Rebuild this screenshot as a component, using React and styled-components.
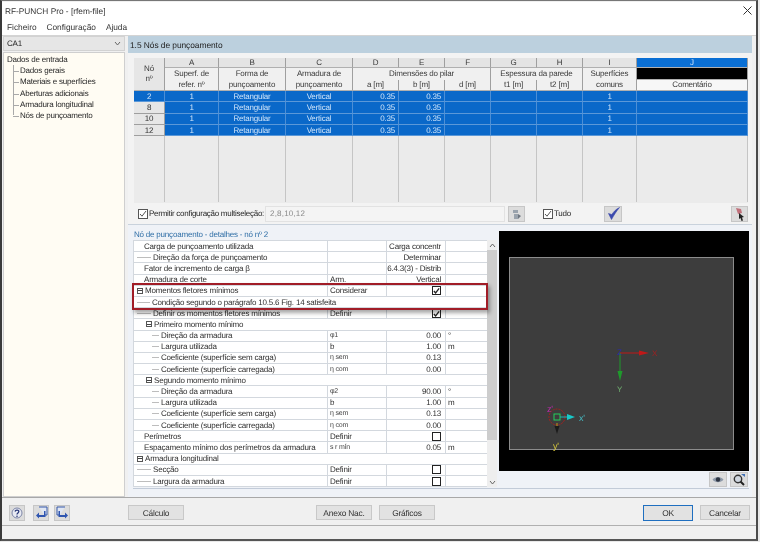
import React from 'react';
import styled, { createGlobalStyle } from 'styled-components';

const GlobalStyle = createGlobalStyle`
  html, body { margin: 0; padding: 0; background: #e9e9e9; }
  body { font-family: "Liberation Sans", Arial, sans-serif; font-size: 8px; letter-spacing: -0.2px; color: #262626; text-rendering: geometricPrecision; }
  * { box-sizing: border-box; }
`;

const Page = styled.div`
  width: 760px;
  height: 542px;
  overflow: hidden;
  filter: blur(0.3px);
`;

const Window = styled.div`
  width: 758px;
  height: 541px;
  display: flex;
  flex-direction: column;
  background: #f0f0f0;
  border-top: 1px solid #777;
  border-left: 2px solid #3a3a3a;
  border-right: 2px solid #4a4a4a;
  border-bottom: 2px solid #555;
`;

const TitleBar = styled.div`
  height: 17px;
  margin-top: 1px;
  flex: none;
  display: flex;
  align-items: center;
  justify-content: space-between;
  background: #fff;
  padding: 0 4px 0 3px;
  font-size: 8.3px;
  letter-spacing: 0;
  color: #333;
`;

const MenuBar = styled.div`
  height: 17px;
  flex: none;
  display: flex;
  align-items: center;
  gap: 10px;
  padding-left: 5px;
  background: #fff;
  font-size: 8.3px;
  letter-spacing: 0;
  color: #333;
  border-bottom: 1px solid #d4d4d4;
`;

const Body = styled.div`
  height: 462px;
  flex: none;
  display: flex;
  padding: 0 4px 0 1px;
  gap: 3px;
  border-bottom: 1px solid #a8a8a8;
`;

const Sidebar = styled.div`
  width: 122px;
  flex: none;
  display: flex;
  flex-direction: column;
  gap: 1px;
`;

const Combo = styled.div`
  height: 15px;
  flex: none;
  display: flex;
  align-items: center;
  justify-content: space-between;
  padding: 0 3px;
  background: #e6e6e6;
  border: 1px solid #d2d2d2;
`;

const Tree = styled.div`
  flex: 1;
  background: #fffcf3;
  border: 1px solid #cfcfcf;
  padding: 1px 0 0 3px;
`;

const TreeRoot = styled.div`
  height: 11.2px;
  line-height: 11.2px;
`;

const TreeList = styled.div`
  margin-left: 6px;
  background: linear-gradient(#a9a9a9, #a9a9a9) no-repeat 0 0 / 1px calc(100% - 6px);
`;

const TreeItem = styled.div`
  height: 11.2px;
  line-height: 11.2px;
  padding-left: 7px;
  background: linear-gradient(#a9a9a9, #a9a9a9) no-repeat 0 6px / 6px 1px;
`;

const Main = styled.div`
  flex: 1;
  min-width: 0;
  display: flex;
  flex-direction: column;
  background: #eff2f7;
`;

const SectionTitle = styled.div`
  height: 17px;
  flex: none;
  display: flex;
  align-items: center;
  padding-left: 2px;
  background: #bcd0de;
  font-size: 8.4px;
  letter-spacing: -0.05px;
  color: #222;
`;

const UpperPanel = styled.div`
  height: 172px;
  flex: none;
  padding: 5px 4px 0 6px;
  background: #f3f3f3;
  border-bottom: 1px solid #c9d2dc;
`;

const InputGrid = styled.div`
  display: grid;
  grid-template-columns: 31px 54px 67px 67px 46px 46px 46px 46px 46px 54px 111px;
  grid-template-rows: 10px 11.5px 11.5px repeat(4, 11.3px) 66px;
  height: 145px;
  background: #ebebeb;
  text-align: center;
  color: #3a3a3a;
`;

const HeadCell = styled.div`
  grid-column: ${p => p.$span ? `span ${p.$span}` : 'auto'};
  grid-row: ${p => p.$rows ? `span ${p.$rows}` : 'auto'};
  display: flex;
  align-items: center;
  justify-content: center;
  line-height: 10px;
  background: ${p => p.$bg || '#f0f0f0'};
  border-right: 1px solid #9f9f9f;
  border-bottom: ${p => p.$open ? 'none' : '1px solid #b0b0b0'};
  color: ${p => p.$fg || 'inherit'};
`;

const DataCell = styled.div`
  display: flex;
  align-items: center;
  justify-content: ${p => p.$right ? 'flex-end' : 'center'};
  padding-right: ${p => p.$right ? '3px' : '0'};
  background: ${p => p.$head ? '#e6e6e6' : '#0a68c9'};
  color: ${p => p.$head ? '#333' : '#cfe4fa'};
  border-right: 1px solid ${p => p.$head ? '#9f9f9f' : '#4d8fd6'};
  border-bottom: 1px solid ${p => p.$head ? '#9f9f9f' : '#5b98d8'};
`;

const EmptyCell = styled.div`
  background: #ebebeb;
  border-right: 1px solid #c5c5c5;
`;

const MultiBar = styled.div`
  height: 21px;
  display: flex;
  align-items: center;
  padding-left: 4px;
`;

const Box = styled.span`
  width: ${p => p.$size || 10}px;
  height: ${p => p.$size || 10}px;
  flex: none;
  margin-left: ${p => p.$ml || 0}px;
  display: inline-flex;
  background: #fff;
  border: 1px solid ${p => p.$dark ? '#222' : '#555'};
`;

const BarLabel = styled.span`
  width: ${p => p.$w}px;
  flex: none;
  margin-left: 1px;
  white-space: nowrap;
  letter-spacing: -0.27px;
`;

const MultiInput = styled.div`
  width: 240px;
  height: 16px;
  margin-left: 1px;
  padding-left: 4px;
  display: flex;
  align-items: center;
  background: #f4f4f4;
  border: 1px solid #e2e2e2;
  color: #8a8a8a;
  letter-spacing: .2px;
`;

const IconButton = styled.div`
  width: ${p => p.$w || 17}px;
  height: ${p => p.$h || 16}px;
  flex: none;
  margin-left: ${p => p.$ml || 0}px;
  display: flex;
  align-items: center;
  justify-content: center;
  background: #dcdcdc;
  border: 1px solid #c6c6c6;
`;

const Spacer = styled.div`
  flex: 1;
`;

const LowerPanel = styled.div`
  display: flex;
  height: 260px;
  flex: none;
  margin: 4px 3px 0 5px;
  border-bottom: 1px solid #c2cbd8;
`;

const DetailColumn = styled.div`
  width: 364px;
  flex: none;
  display: flex;
  flex-direction: column;
`;

const DetailTitle = styled.div`
  height: 11px;
  flex: none;
  padding-left: 1px;
  line-height: 11px;
  color: #2f6ea6;
`;

const DetailBody = styled.div`
  position: relative;
  display: flex;
`;

const DetailGrid = styled.div`
  width: 354px;
  flex: none;
  display: grid;
  grid-template-columns: 194px 58.7px 59.3px 42px;
  grid-auto-rows: 11.2px;
  background: #fff;
  border-top: 1px solid #d3d8de;
  border-left: 1px solid #d3d8de;
`;

const DetailCell = styled.div`
  grid-column: ${p => p.$span ? `span ${p.$span}` : 'auto'};
  display: flex;
  align-items: center;
  justify-content: ${p => p.$right ? 'flex-end' : 'flex-start'};
  padding: ${p => p.$right ? '0 4px 0 0' : '0 0 0 2px'};
  white-space: nowrap;
  overflow: hidden;
  border-right: 1px solid #d3d8de;
  border-bottom: 1px solid #d3d8de;
  color: #2e2e2e;
`;

const Stub = styled.span`
  width: ${p => p.$w}px;
  height: 1px;
  flex: none;
  margin-right: 2px;
  background: linear-gradient(#bdbdbd, #bdbdbd) no-repeat right / ${p => p.$line}px 1px;
`;

const Indent = styled.span`
  width: ${p => p.$w}px;
  flex: none;
`;

const Expander = styled.span`
  width: 6px;
  height: 6px;
  flex: none;
  margin-right: 2px;
  border: 1px solid #555;
  background: linear-gradient(#444, #444) no-repeat center / 4px 1px;
`;

const Symbol = styled.span`
  font-size: 7px;
  color: #444;
`;

const Scrollbar = styled.div`
  width: 10px;
  flex: none;
  display: flex;
  flex-direction: column;
  background: #eeeeee;
`;

const ScrollArrow = styled.div`
  height: 10px;
  flex: none;
  display: flex;
  align-items: center;
  justify-content: center;
`;

const ScrollThumb = styled.div`
  height: 190px;
  flex: none;
  background: #cdcdcd;
`;

const Highlight = styled.div`
  position: absolute;
  left: -1px;
  top: 43px;
  width: 356px;
  height: 27px;
  border: 2px solid #a11d27;
  box-shadow: 2px 3px 4px rgba(0, 0, 0, .35);
`;

const ViewColumn = styled.div`
  width: 250px;
  flex: none;
  margin: 2px 0 0 2px;
  display: flex;
  flex-direction: column;
`;

const Viewport = styled.div`
  height: 240px;
  flex: none;
  background: #000;
`;

const ViewTools = styled.div`
  flex: 1;
  display: flex;
  justify-content: flex-end;
  align-items: center;
  gap: 3px;
  padding-right: 1px;
`;

const Footer = styled.div`
  height: 28px;
  flex: none;
  display: flex;
  align-items: center;
  padding: 2px 5px 0 7px;
  border-bottom: 1px solid #b0b0b0;
`;

const TextButton = styled.div`
  width: ${p => p.$w || 56}px;
  height: ${p => p.$primary ? 16 : 15}px;
  flex: none;
  margin-left: ${p => p.$ml || 0}px;
  display: flex;
  align-items: center;
  justify-content: center;
  background: #e2e2e2;
  border: 1px solid ${p => p.$primary ? '#1f6fc0' : '#c8c8c8'};
  font-size: 8.4px;
  color: #333;
`;

const CheckMark = () => (
  <svg width="8" height="8" viewBox="0 0 8 8">
    <path d="M1 4l2 2.2L7 1" fill="none" stroke="#222" strokeWidth="1.5" />
  </svg>
);

const LightCheck = () => (
  <svg width="8" height="8" viewBox="0 0 8 8">
    <path d="M1 4l2 2.2L7 1" fill="none" stroke="#555" strokeWidth="1" />
  </svg>
);

const Chevron = ({ up }) => (
  <svg width="7" height="5" viewBox="0 0 7 5">
    <path d={up ? 'M1 4l2.5-3L6 4' : 'M1 1l2.5 3L6 1'} fill="none" stroke="#666" strokeWidth="1" />
  </svg>
);

const TickIcon = () => (
  <svg width="13" height="13" viewBox="0 0 13 13">
    <path d="M1.500 6.500l3 6C7 8 9.500 4 12.500 .5 8.500 2.500 6.500 5 4.800 7.500z" fill="#3a49ad" stroke="#3a49ad" strokeWidth=".6" />
  </svg>
);

const PickIcon = () => (
  <svg width="11" height="13" viewBox="0 0 11 13">
    <path d="M2 6V3h5v3zM3 7h4v5H3z" fill="#9aa3ad" />
    <path d="M7 7l3 2-3 3z" fill="#6e7680" />
  </svg>
);

const EraserIcon = () => (
  <svg width="13" height="14" viewBox="0 0 13 14">
    <path d="M3 1l5 1 1 4-4 1z" fill="#c0707a" />
    <path d="M6 6l5 4-2 .5 1 3-1.500.5-1-3L6 12z" fill="#222" />
  </svg>
);

const EyeIcon = () => (
  <svg width="12" height="9" viewBox="0 0 12 9">
    <path d="M.5 4.500C3 1 9 1 11.500 4.500 9 8 3 8 .5 4.500z" fill="#8e99a8" />
    <circle cx="6" cy="4.500" r="2.200" fill="#2c3340" />
  </svg>
);

const ZoomIcon = () => (
  <svg width="14" height="13" viewBox="0 0 14 13">
    <circle cx="6" cy="6" r="3.700" fill="#cfd6df" stroke="#333" strokeWidth="1.400" />
    <path d="M8.500 8.500l3.500 3.500" stroke="#222" strokeWidth="2" />
    <path d="M9 1h4v3z" fill="#3f6fb5" />
  </svg>
);

const HelpIcon = () => (
  <svg width="12" height="12" viewBox="0 0 12 12">
    <circle cx="6" cy="6" r="5" fill="#e8eaf3" stroke="#7d86a8" />
    <path d="M4 4.500C4.500 2.500 8 2.800 7.800 4.700 7.600 6 6 6 6 7.500" fill="none" stroke="#2b3a7a" strokeWidth="1.300" />
    <circle cx="6" cy="9.300" r=".8" fill="#2b3a7a" />
  </svg>
);

const NavIcon = ({ flip }) => (
  <svg width="13" height="13" viewBox="0 0 13 13" style={{ transform: flip ? 'scaleX(-1)' : 'none' }}>
    <path d="M4 1h8v8H9" fill="#dfe6f4" stroke="#3658a8" />
    <path d="M9 5v4H4V6.500L1 9.500l3 3V11h6.500V5z" fill="#2f55b0" />
  </svg>
);

const ModelView = () => (
  <svg width="250" height="240" viewBox="0 0 250 240" fontFamily="Liberation Sans, sans-serif" fontSize="9">
    <rect x="10.500" y="26.500" width="224" height="192" fill="#3d3d3d" stroke="#8c8c8c" />
    <path d="M121 122h22" stroke="#c01818" />
    <path d="M140 119.500l10 2.500-10 2.500z" fill="#c01818" />
    <text x="153" y="125" fill="#a32020" fontSize="8">X</text>
    <path d="M121 122v20" stroke="#1f9a2c" />
    <path d="M118.500 140l2.500 10 2.500-10z" fill="#1f9a2c" />
    <text x="118" y="161" fill="#6fae6f" fontSize="8">Y</text>
    <text x="118" y="124" fill="#2a2ab0" fontSize="8">Z</text>
    <circle cx="58" cy="186" r="8" fill="none" stroke="#a81f1f" strokeDasharray="2 1" />
    <rect x="55" y="183" width="6" height="6" fill="none" stroke="#23d05a" />
    <path d="M61 186h10" stroke="#19b8b8" />
    <path d="M68 183l8 3-8 3z" fill="#19c8c8" />
    <text x="80" y="190" fill="#46b8c0" fontSize="9">x'</text>
    <path d="M58 192v8" stroke="#b89a18" />
    <path d="M55.500 195l2.500 8 2.500-8z" fill="#1c1c1c" />
    <text x="54" y="218" fill="#d8c83c" fontSize="9">y'</text>
    <text x="48" y="181" fill="#c02ab0" fontSize="9">z'</text>
  </svg>
);

const letters = ['A', 'B', 'C', 'D', 'E', 'F', 'G', 'H', 'I'];
const inputRows = ['2', '8', '10', '12'];

const detailRows = [
  { label: 'Carga de punçoamento utilizada', value: 'Carga concentr' },
  { label: 'Direção da força de punçoamento', stub: 15, line: 14, value: 'Determinar', right: true },
  { label: 'Fator de incremento de carga β', value: '6.4.3(3) - Distrib' },
  { label: 'Armadura de corte', symbol: 'Arm.', value: 'Vertical', right: true },
  { label: 'Momentos fletores mínimos', expand: 1, symbol: 'Considerar', check: true },
  { label: 'Condição segundo o parágrafo 10.5.6 Fig. 14 satisfeita', stub: 14, line: 13, span: 4 },
  { label: 'Definir os momentos fletores mínimos', stub: 15, line: 14, symbol: 'Definir', check: true },
  { label: 'Primeiro momento mínimo', expand: 10, span: 4 },
  { label: 'Direção da armadura', stub: 23, line: 7, symbol: <Symbol>φ1</Symbol>, value: '0.00', right: true, unit: '°' },
  { label: 'Largura utilizada', stub: 23, line: 7, symbol: 'b', value: '1.00', right: true, unit: 'm' },
  { label: 'Coeficiente (superfície sem carga)', stub: 23, line: 7, symbol: <Symbol>η sem</Symbol>, value: '0.13', right: true },
  { label: 'Coeficiente (superfície carregada)', stub: 23, line: 7, symbol: <Symbol>η com</Symbol>, value: '0.00', right: true },
  { label: 'Segundo momento mínimo', expand: 10, span: 4 },
  { label: 'Direção da armadura', stub: 23, line: 7, symbol: <Symbol>φ2</Symbol>, value: '90.00', right: true, unit: '°' },
  { label: 'Largura utilizada', stub: 23, line: 7, symbol: 'b', value: '1.00', right: true, unit: 'm' },
  { label: 'Coeficiente (superfície sem carga)', stub: 23, line: 7, symbol: <Symbol>η sem</Symbol>, value: '0.13', right: true },
  { label: 'Coeficiente (superfície carregada)', stub: 23, line: 7, symbol: <Symbol>η com</Symbol>, value: '0.00', right: true },
  { label: 'Perímetros', symbol: 'Definir', check: false },
  { label: 'Espaçamento mínimo dos perímetros da armadura', symbol: <Symbol>s r mín</Symbol>, value: '0.05', right: true, unit: 'm' },
  { label: 'Armadura longitudinal', expand: 1, span: 4 },
  { label: 'Secção', stub: 15, line: 14, symbol: 'Definir', check: false },
  { label: 'Largura da armadura', stub: 15, line: 14, symbol: 'Definir', check: false },
];

const DetailLabel = ({ row }) => (
  <DetailCell $span={row.span}>
    {row.expand ? <Indent $w={row.expand} /> : null}
    {row.expand ? <Expander /> : null}
    {row.stub ? <Stub $w={row.stub} $line={row.line} /> : null}
    {!row.expand && !row.stub ? <Indent $w={8} /> : null}
    {row.label}
  </DetailCell>
);

const App = () => {
  return (
    <Page>
      <GlobalStyle />
      <Window>
        <TitleBar>
          <span>RF-PUNCH Pro - [rfem-file]</span>
          <svg width="9" height="9" viewBox="0 0 9 9">
            <path d="M.5.5l8 8M8.500.5l-8 8" stroke="#333" fill="none" />
          </svg>
        </TitleBar>
        <MenuBar>
          <span>Ficheiro</span>
          <span>Configuração</span>
          <span>Ajuda</span>
        </MenuBar>
        <Body>
          <Sidebar>
            <Combo>
              <span>CA1</span>
              <Chevron />
            </Combo>
            <Tree>
              <TreeRoot>Dados de entrada</TreeRoot>
              <TreeList>
                <TreeItem>Dados gerais</TreeItem>
                <TreeItem>Materiais e superfícies</TreeItem>
                <TreeItem>Aberturas adicionais</TreeItem>
                <TreeItem>Armadura longitudinal</TreeItem>
                <TreeItem>Nós de punçoamento</TreeItem>
              </TreeList>
            </Tree>
          </Sidebar>
          <Main>
            <SectionTitle>1.5 Nós de punçoamento</SectionTitle>
            <UpperPanel>
              <InputGrid>
                <HeadCell $rows={3} $bg="#e6e6e6">Nó<br />nº</HeadCell>
                {letters.map(l => <HeadCell key={l} $bg="#e4e4e4">{l}</HeadCell>)}
                <HeadCell $bg="#0a6fd4" $fg="#cfe4fa">J</HeadCell>

                <HeadCell $open>Superf. de</HeadCell>
                <HeadCell $open>Forma de</HeadCell>
                <HeadCell $open>Armadura de</HeadCell>
                <HeadCell $span={3} $open>Dimensões do pilar</HeadCell>
                <HeadCell $span={2} $open>Espessura da parede</HeadCell>
                <HeadCell $open>Superfícies</HeadCell>
                <HeadCell $bg="#000" />

                <HeadCell>refer. nº</HeadCell>
                <HeadCell>punçoamento</HeadCell>
                <HeadCell>punçoamento</HeadCell>
                <HeadCell>a [m]</HeadCell>
                <HeadCell>b [m]</HeadCell>
                <HeadCell>d [m]</HeadCell>
                <HeadCell>t1 [m]</HeadCell>
                <HeadCell>t2 [m]</HeadCell>
                <HeadCell>comuns</HeadCell>
                <HeadCell $bg="#f7f7f7">Comentário</HeadCell>

                {inputRows.map((no, i) => (
                  <React.Fragment key={no}>
                    {i === 0 ? <DataCell>{no}</DataCell> : <DataCell $head>{no}</DataCell>}
                    <DataCell>1</DataCell>
                    <DataCell>Retangular</DataCell>
                    <DataCell>Vertical</DataCell>
                    <DataCell $right>0.35</DataCell>
                    <DataCell $right>0.35</DataCell>
                    <DataCell />
                    <DataCell />
                    <DataCell />
                    <DataCell>1</DataCell>
                    <DataCell />
                  </React.Fragment>
                ))}
                {Array.from({ length: 11 }, (_, i) => <EmptyCell key={i} />)}
              </InputGrid>
              <MultiBar>
                <Box><LightCheck /></Box>
                <BarLabel $w={115}>Permitir configuração multiseleção:</BarLabel>
                <MultiInput>2,8,10,12</MultiInput>
                <IconButton $ml={3}><PickIcon /></IconButton>
                <Box $ml={18}><LightCheck /></Box>
                <BarLabel $w={18}>Tudo</BarLabel>
                <IconButton $w={18} $ml={32}><TickIcon /></IconButton>
                <Spacer />
                <IconButton><EraserIcon /></IconButton>
              </MultiBar>
            </UpperPanel>
            <LowerPanel>
              <DetailColumn>
                <DetailTitle>Nó de punçoamento - detalhes - nó nº 2</DetailTitle>
                <DetailBody>
                  <DetailGrid>
                    {detailRows.map((row, i) => (
                      <React.Fragment key={i}>
                        <DetailLabel row={row} />
                        {row.span ? null : (
                          <>
                            <DetailCell>{row.symbol}</DetailCell>
                            <DetailCell $right>
                              {row.check === undefined ? row.value : (
                                <Box $size={9} $dark>{row.check ? <CheckMark /> : null}</Box>
                              )}
                            </DetailCell>
                            <DetailCell>{row.unit}</DetailCell>
                          </>
                        )}
                      </React.Fragment>
                    ))}
                  </DetailGrid>
                  <Scrollbar>
                    <ScrollArrow><Chevron up /></ScrollArrow>
                    <ScrollThumb />
                    <Spacer />
                    <ScrollArrow><Chevron /></ScrollArrow>
                  </Scrollbar>
                  <Highlight />
                </DetailBody>
              </DetailColumn>
              <ViewColumn>
                <Viewport><ModelView /></Viewport>
                <ViewTools>
                  <IconButton $w={18} $h={15}><EyeIcon /></IconButton>
                  <IconButton $w={18} $h={15}><ZoomIcon /></IconButton>
                </ViewTools>
              </ViewColumn>
            </LowerPanel>
          </Main>
        </Body>
        <Footer>
          <IconButton $w={16}><HelpIcon /></IconButton>
          <IconButton $w={16} $ml={8}><NavIcon /></IconButton>
          <IconButton $w={16} $ml={5}><NavIcon flip /></IconButton>
          <TextButton $ml={58}>Cálculo</TextButton>
          <TextButton $ml={132}>Anexo Nac.</TextButton>
          <TextButton $ml={7}>Gráficos</TextButton>
          <TextButton $w={50} $ml={208} $primary>OK</TextButton>
          <TextButton $w={50} $ml={7}>Cancelar</TextButton>
        </Footer>
      </Window>
    </Page>
  );
};

export default App;
